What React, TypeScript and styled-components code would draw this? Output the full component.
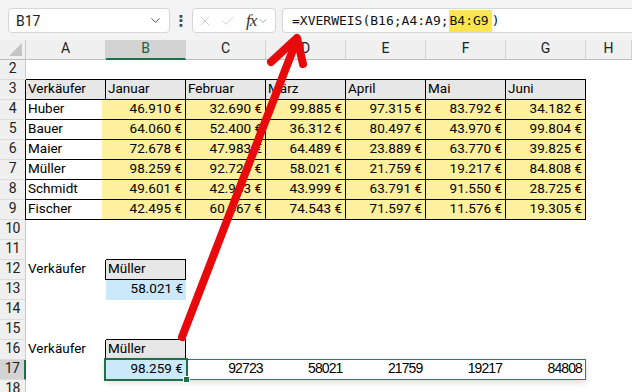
import styled, { createGlobalStyle } from "styled-components"
import { ChevronDown, X, Check } from "lucide-react"

const GlobalStyle = createGlobalStyle`
    html, body { margin: 0; padding: 0; background: #fff; }
    body { font-family: Roboto, "Liberation Sans", sans-serif; color: #000; }
`

const CELL_FONT = `13.5px Roboto, "Liberation Sans", sans-serif`
const YELLOW = "#fef09c"
const BLUE = "#cbe9fa"
const HEAD_GRAY = "#e7e7e7"
const GREEN = "#1e7145"

const Window = styled.div`
    position: relative;
    width: 632px;
    height: 392px;
    overflow: hidden;
    background: #fff;
`

// ---- formula bar ----
const Toolbar = styled.div`
    height: 40px;
    box-sizing: border-box;
    padding: 8px 0 0 8px;
    background: #f3f3f3;
    display: flex;
    align-items: flex-start;
`
const NameBox = styled.div`
    width: 162px;
    height: 25px;
    box-sizing: border-box;
    background: #fff;
    border: 1px solid #d6d6d6;
    border-radius: 4px;
    display: flex;
    align-items: center;
    justify-content: space-between;
    padding: 0 6px 0 7px;
    font: 14px Roboto, "Liberation Sans", sans-serif;
    color: #222;
`
const Dots = styled.div`
    width: 22px;
    height: 25px;
    display: flex;
    align-items: center;
    justify-content: center;
    font: bold 15px "DejaVu Sans", sans-serif;
    color: #444;
`
const FxBox = styled.div`
    width: 84px;
    height: 25px;
    box-sizing: border-box;
    margin-right: 6px;
    background: #fff;
    border: 1px solid #d6d6d6;
    border-radius: 4px;
    display: flex;
    align-items: center;
    gap: 7px;
    padding-left: 4px;
    color: #c2c2c2;
`
const Fx = styled.span`
    font: italic 17px "Liberation Serif", serif;
    color: #333;
    margin-left: 3px;
    letter-spacing: -1px;
`
const FormulaInput = styled.div`
    flex: 1;
    height: 25px;
    box-sizing: border-box;
    background: #fff;
    border: 1px solid #d6d6d6;
    border-right: none;
    border-radius: 4px 0 0 4px;
    display: flex;
    align-items: center;
    padding-left: 9px;
    font: 13px "DejaVu Sans Mono", "Liberation Mono", monospace;
    color: #111;
    white-space: pre;
`
const RefMark = styled.span`
    background: #ffe54d;
    line-height: 22px;
    padding: 0 3px 0 1px;
`

// ---- sheet ----
const Sheet = styled.div`
    display: flex;
    flex-direction: column;
`
const Row = styled.div`
    display: flex;
    height: 20px;
`
const Corner = styled.div`
    width: 26px;
    flex: none;
    box-sizing: border-box;
    background: #f0f0f0;
    border-right: 1px solid #c9c9c9;
    border-bottom: 1px solid #bdbdbd;
    display: flex;
    align-items: flex-end;
    justify-content: flex-end;
    padding: 0 3px 3px 0;
`
const ColHead = styled.div<{ $active?: boolean }>`
    width: 80px;
    flex: none;
    box-sizing: border-box;
    background: ${p => p.$active ? "#d3d3d3" : "#f0f0f0"};
    border-right: 1px solid #d2d2d2;
    border-bottom: ${p => p.$active ? `2px solid ${GREEN}` : "1px solid #bdbdbd"};
    text-align: center;
    line-height: 20px;
    font: 14px Roboto, "Liberation Sans", sans-serif;
    color: ${p => p.$active ? "#1e5e3a" : "#222"};
    &:last-child { flex: 1; }
`
const RowHead = styled.div<{ $active?: boolean }>`
    width: 26px;
    flex: none;
    box-sizing: border-box;
    background: ${p => p.$active ? "#d3d3d3" : "#f0f0f0"};
    border-right: ${p => p.$active ? `2px solid ${GREEN}` : "1px solid #c9c9c9"};
    border-bottom: 1px solid #dcdcdc;
    text-align: center;
    line-height: 20px;
    font: 14px Roboto, "Liberation Sans", sans-serif;
    letter-spacing: -0.6px;
    color: #222;
`

type CellProps = {
    $bg?: string
    $box?: boolean
    $top?: boolean
    $left?: boolean
    $right?: boolean
    $bleed?: string
}
const Cell = styled.div<CellProps>`
    width: 80px;
    flex: none;
    height: 20px;
    box-sizing: border-box;
    padding: 0 3px 0 2px;
    background: ${p => p.$bg ?? "transparent"};
    border-right: ${p => p.$box && !p.$bleed ? "1px solid #000" : "none"};
    border-bottom: ${p => p.$box ? "1px solid #000" : "none"};
    box-shadow: ${p => [
        p.$top ? "0 -1px 0 #000" : "",
        p.$left ? "-1px 0 0 #000" : "",
        p.$bleed ? `inset -4px 0 0 ${p.$bleed}` : "",
    ].filter(Boolean).join(", ") || "none"};
    text-align: ${p => p.$right ? "right" : "left"};
    line-height: 20px;
    font: ${CELL_FONT};
    white-space: nowrap;
`
const SpillRange = styled.div`
    display: flex;
    width: 481px;
    height: 21px;
    box-sizing: border-box;
    margin: -1px 0 0 -1px;
    border: 1px solid #3a65b6;
    box-shadow: 0 2px 7px rgba(0, 0, 0, 0.16);
    background: #fff;
`
const SpillCell = styled.div<{ $bg?: string; $selected?: boolean }>`
    position: relative;
    flex: 1;
    height: 19px;
    padding-right: 3px;
    background: ${p => p.$bg ?? "transparent"};
    outline: ${p => p.$selected ? `2px solid ${GREEN}` : "none"};
    text-align: right;
    line-height: 19px;
    font: ${p => p.$selected ? CELL_FONT : `14px "Liberation Sans Narrow", "Liberation Sans", Arial, sans-serif`};
    letter-spacing: ${p => p.$selected ? "0" : "-0.9px"};
    z-index: ${p => p.$selected ? 1 : 0};
    &::after {
        content: "";
        display: ${p => p.$selected ? "block" : "none"};
        position: absolute;
        right: -4px;
        bottom: -4px;
        width: 5px;
        height: 5px;
        background: ${GREEN};
        border: 1px solid #fff;
    }
`
const Filler = styled.div`
    flex: 1;
`
const ArrowLayer = styled.svg`
    position: absolute;
    left: 0;
    top: 0;
    pointer-events: none;
`

const columns = ["A", "B", "C", "D", "E", "F", "G", "H"]
const months = ["Januar", "Februar", "März", "April", "Mai", "Juni"]
const sales: [string, number[]][] = [
    ["Huber", [46910, 32690, 99885, 97315, 83792, 34182]],
    ["Bauer", [64060, 52400, 36312, 80497, 43970, 99804]],
    ["Maier", [72678, 47983, 64489, 23889, 63770, 39825]],
    ["Müller", [98259, 92723, 58021, 21759, 19217, 84808]],
    ["Schmidt", [49601, 42903, 43999, 63791, 91550, 28725]],
    ["Fischer", [42495, 60467, 74543, 71597, 11576, 19305]],
]

const euro = (n: number) => String(n).replace(/\B(?=(\d{3})+(?!\d))/g, ".") + " €"

function EmptyRow({ n }: { n: number }) {
    return (
        <Row>
            <RowHead>{n}</RowHead>
            <Filler />
        </Row>
    )
}

export default function App() {
    const mueller = sales[3][1]
    return (
        <Window>
            <GlobalStyle />
            <Toolbar>
                <NameBox>B17<ChevronDown size={15} strokeWidth={1.5} color="#444" /></NameBox>
                <Dots>⋮</Dots>
                <FxBox>
                    <X size={16} strokeWidth={1.2} />
                    <Check size={16} strokeWidth={1.2} />
                    <Fx>fx</Fx>
                    <ChevronDown size={12} strokeWidth={1.5} color="#888" style={{ marginLeft: -6 }} />
                </FxBox>
                <FormulaInput>=XVERWEIS(B16;A4:A9;<RefMark>B4:G9</RefMark>)</FormulaInput>
            </Toolbar>

            <Sheet>
                <Row>
                    <Corner>
                        <svg width="13" height="13" viewBox="0 0 13 13"><path d="M13 0V13H0Z" fill="#c4c4c4" /></svg>
                    </Corner>
                    {columns.map(c => <ColHead key={c} $active={c === "B"}>{c}</ColHead>)}
                </Row>

                <EmptyRow n={2} />

                <Row>
                    <RowHead>3</RowHead>
                    <Cell $bg={HEAD_GRAY} $box $top $left>Verkäufer</Cell>
                    {months.map(m => <Cell key={m} $bg={HEAD_GRAY} $box $top>{m}</Cell>)}
                </Row>

                {sales.map(([name, values], i) => (
                    <Row key={name}>
                        <RowHead>{i + 4}</RowHead>
                        <Cell $box $left $bleed={YELLOW}>{name}</Cell>
                        {values.map((v, j) => <Cell key={j} $bg={YELLOW} $box $right>{euro(v)}</Cell>)}
                    </Row>
                ))}

                <EmptyRow n={10} />
                <EmptyRow n={11} />

                <Row>
                    <RowHead>12</RowHead>
                    <Cell>Verkäufer</Cell>
                    <Cell $bg={HEAD_GRAY} $box $top $left>Müller</Cell>
                </Row>
                <Row>
                    <RowHead>13</RowHead>
                    <Cell />
                    <Cell $bg={BLUE} $right>{euro(mueller[2])}</Cell>
                </Row>

                <EmptyRow n={14} />
                <EmptyRow n={15} />

                <Row>
                    <RowHead>16</RowHead>
                    <Cell>Verkäufer</Cell>
                    <Cell $bg={HEAD_GRAY} $box $top $left>Müller</Cell>
                </Row>
                <Row>
                    <RowHead $active>17</RowHead>
                    <Cell />
                    <SpillRange>
                        <SpillCell $bg={BLUE} $selected>{euro(mueller[0])}</SpillCell>
                        {mueller.slice(1).map((v, j) => <SpillCell key={j}>{v}</SpillCell>)}
                    </SpillRange>
                </Row>

                <EmptyRow n={18} />
            </Sheet>

            <ArrowLayer width="632" height="392" viewBox="0 0 632 392">
                <g stroke="#e8090b" strokeWidth="8" strokeLinecap="round" strokeLinejoin="round" fill="none">
                    <line x1="182" y1="337" x2="296" y2="42" />
                    <polyline points="271,62 297,38 303,64" />
                </g>
            </ArrowLayer>
        </Window>
    )
}
